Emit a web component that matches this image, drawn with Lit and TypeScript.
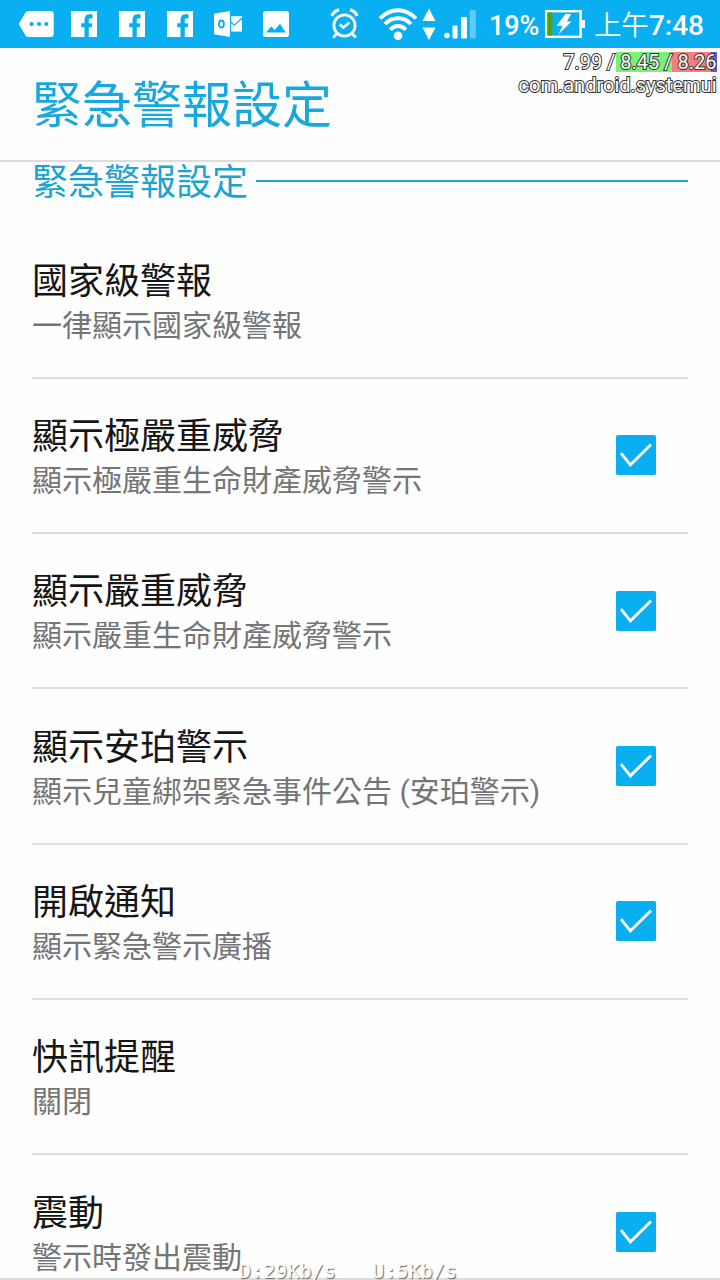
import { LitElement, html, css, nothing } from "lit";
import { customElement, property } from "lit/decorators.js";

interface Setting {
  title: string;
  summary: string;
  checked?: boolean;
}

const SETTINGS: Setting[] = [
  { title: "國家級警報", summary: "一律顯示國家級警報" },
  { title: "顯示極嚴重威脅", summary: "顯示極嚴重生命財產威脅警示", checked: true },
  { title: "顯示嚴重威脅", summary: "顯示嚴重生命財產威脅警示", checked: true },
  { title: "顯示安珀警示", summary: "顯示兒童綁架緊急事件公告 (安珀警示)", checked: true },
  { title: "開啟通知", summary: "顯示緊急警示廣播", checked: true },
  { title: "快訊提醒", summary: "關閉" },
  { title: "震動", summary: "警示時發出震動", checked: true },
];

const facebook = html`<svg width="26" height="26" viewBox="0 0 26 26">
  <path fill="#fff" fill-rule="evenodd" d="M0 0H26V26H17.8V16.2H20.8L21.3 12.2H17.8V9.6C17.8 8 18.4 7.3 20 7.3H21.6V3.5C21 3.4 20 3.3 19 3.3C15.4 3.3 13.5 5.3 13.5 9V12.2H10.2V16.2H13.5V26H0Z"/>
</svg>`;

@customElement("status-bar")
class StatusBar extends LitElement {
  static styles = css`
    :host {
      display: flex;
      align-items: center;
      height: 48px;
      padding: 0 16px 0 19px;
      background: #0aaff1;
      color: #fff;
      font: 500 28px/44px Roboto, "Noto Sans CJK TC", sans-serif;
      white-space: nowrap;
    }
    svg { display: block; flex: none; }
    .notifications { display: flex; align-items: center; gap: 22px; flex: 1; }
    .message { margin-right: -5px; }
    .mail { margin: 0 -2px 0 -1px; }
    .percent { width: 52px; margin-left: 11px; padding-top: 3px; font-size: 27px; }
    .battery { margin-left: 4px; }
    .clock { display: flex; margin-left: 9px; padding-top: 3px; }
    .period { font-weight: 350; font-size: 27.5px; }
  `;

  render() {
    return html`
      <div class="notifications">
        <svg class="message" width="35" height="26" viewBox="0 0 35 26">
          <path fill="#fff" d="M9.5 0H32Q34.7 0 34.7 2.7V23.3Q34.7 26 32 26H9.5Q7.6 26 6.5 24.4L.6 14.5Q-.2 13 .6 11.5L6.5 1.6Q7.6 0 9.5 0Z"/>
          <g fill="#0aaff1"><circle cx="12.6" cy="13" r="2.1"/><circle cx="20" cy="13" r="2.1"/><circle cx="27.4" cy="13" r="2.1"/></g>
        </svg>
        ${facebook}${facebook}${facebook}
        <svg class="mail" width="29" height="26" viewBox="0 0 29 26">
          <path fill="#fff" d="M0 2.7L16 0V26L0 23.2Z"/>
          <ellipse cx="7.4" cy="13" rx="2.5" ry="3.5" fill="none" stroke="#0aaff1" stroke-width="1.8"/>
          <path fill="#fff" d="M17.2 5.2H28V20.6H17.2Z"/>
          <path d="M17 11.2L20.4 14.2L28.5 6.7" fill="none" stroke="#0aaff1" stroke-width="1.2"/>
        </svg>
        <svg width="26" height="26" viewBox="0 0 26 26">
          <rect width="26" height="26" rx="2.6" fill="#fff"/>
          <path fill="#0aaff1" d="M3 21.5L8.2 15.5L11.7 19L17 12.8L22.8 21.5Z"/>
        </svg>
      </div>
      <svg width="148" height="34" viewBox="330 7 148 34">
        <g fill="none" stroke="#fff" stroke-width="2.8">
          <circle cx="344.5" cy="25.5" r="10.6"/>
          <path d="M339.8 24.2L343.4 27.6L349.3 22.4" stroke-width="2.6"/>
          <path d="M332 16Q333.6 11.2 339 9.8M350 9.8Q355.4 11.2 357 16" stroke-width="3.2"/>
          <path d="M337 33.5L333.2 37.5M352 33.5L355.8 37.5"/>
        </g>
        <g fill="none" stroke="#fff" stroke-width="3.9">
          <path d="M380 18.5Q388 10.2 398 10.2T416 18.5"/>
          <path d="M385 24Q390.6 18.2 398 18.2T411 24"/>
          <path d="M390.2 29.8Q393.6 26 398 26T405.8 29.8"/>
        </g>
        <circle cx="398" cy="35.8" r="4.3" fill="#fff"/>
        <path fill="#fff" d="M422.5 21L429 8.5L435.5 21ZM422.5 27.5H435.5L429 40Z"/>
        <g fill="#fff">
          <circle cx="447" cy="35.5" r="2.8"/>
          <rect x="452.5" y="25.5" width="5" height="13" rx="1"/>
          <rect x="461" y="17" width="6" height="21.5" rx="1"/>
          <rect x="469.7" y="10" width="6.2" height="28.5" rx="1" opacity=".35"/>
        </g>
      </svg>
      <span class="percent">19%</span>
      <svg class="battery" width="40" height="30" viewBox="0 0 40 30">
        <rect x="1.2" y="2.2" width="34.4" height="25.6" fill="none" stroke="#fff" stroke-width="2.4"/>
        <rect x="36" y="11" width="4" height="8" fill="#fff"/>
        <rect x="2.4" y="3.4" width="5" height="23.2" fill="#4fa511"/>
        <path fill="#fff" d="M20.5 5H26L22 12.4H26.5L13.4 25.4L17.5 16.7H11.5Z"/>
      </svg>
      <div class="clock"><span class="period">上午</span><span>7:48</span></div>
    `;
  }
}

@customElement("setting-row")
class SettingRow extends LitElement {
  @property({ attribute: false }) setting!: Setting;

  static styles = css`
    :host {
      display: flex;
      align-items: center;
      justify-content: space-between;
      flex: none;
      box-sizing: border-box;
      height: 155.33px;
      margin: 0 32px;
      padding-right: 32px;
      border-bottom: 2px solid #dedede;
    }
    .text { display: grid; padding-top: 7.5px; white-space: nowrap; }
    .title { font-size: 36px; line-height: 44px; color: #161616; }
    .summary { font-size: 30px; line-height: 44px; color: #757575; }
    .check { display: block; flex: none; }
  `;

  render() {
    const { title, summary, checked } = this.setting;
    return html`
      <div class="text">
        <span class="title">${title}</span>
        <span class="summary">${summary}</span>
      </div>
      ${checked
        ? html`<svg class="check" width="40" height="40" viewBox="0 0 40 40">
            <rect width="40" height="40" rx="1.8" fill="#0aaff1"/>
            <path d="M5 18.2L14.4 29.8L35 9.5" fill="none" stroke="#fff" stroke-width="2.9"/>
          </svg>`
        : nothing}
    `;
  }
}

@customElement("app-root")
class AppRoot extends LitElement {
  static styles = css`
    :host {
      display: flex;
      flex-direction: column;
      position: relative;
      width: 720px;
      height: 1280px;
      overflow: hidden;
      background: #fefefe;
      font-family: Roboto, "Noto Sans CJK TC", sans-serif;
    }
    .header {
      flex: none;
      box-sizing: border-box;
      height: 114px;
      padding: 0 32px;
      border-bottom: 2px solid #dcdcdc;
      color: #18a8e0;
      font-size: 50px;
      line-height: 117px;
    }
    .list {
      display: flex;
      flex-direction: column;
      flex: 1;
      min-height: 0;
      overflow: hidden;
      border-bottom: 2px solid #dcdcdc;
    }
    .category {
      display: flex;
      align-items: center;
      flex: none;
      gap: 8px;
      height: 38px;
      margin: 0 32px 23.33px;
      color: #1ba3d3;
      font-size: 36px;
      line-height: 36px;
    }
    .category span:first-child { padding-top: 4px; }
    .rule { flex: 1; height: 2px; background: #1ba3d3; }
    .usage {
      position: absolute;
      top: 51px;
      right: 3.5px;
      color: #fff;
      font-size: 20px;
      line-height: 23px;
      text-align: right;
      white-space: pre;
      -webkit-text-stroke: 2px #333;
      paint-order: stroke fill;
    }
    .load {
      width: fit-content;
      margin-left: auto;
      background: linear-gradient(to right, transparent 53px, #76f276 53px 109px, #f77c7c 109px 148px, #5a5ad8 148px) 0 1px / 100% 20px no-repeat;
    }
    .traffic {
      position: absolute;
      top: 1262px;
      left: 239px;
      color: #fcfcfc;
      font: 20px/18px "DejaVu Sans Mono", monospace;
      letter-spacing: 0.08px;
      white-space: pre;
      text-shadow: 1px 1px 1px #666;
    }
  `;

  render() {
    return html`
      <status-bar></status-bar>
      <div class="header">緊急警報設定</div>
      <div class="list">
        <div class="category"><span>緊急警報設定</span><span class="rule"></span></div>
        ${SETTINGS.map((s) => html`<setting-row .setting=${s}></setting-row>`)}
      </div>
      <div class="usage"><div class="load">7.99 / 8.45 / 8.26</div><div>com.android.systemui</div></div>
      <div class="traffic">D:29Kb/s   U:5Kb/s</div>
    `;
  }
}
